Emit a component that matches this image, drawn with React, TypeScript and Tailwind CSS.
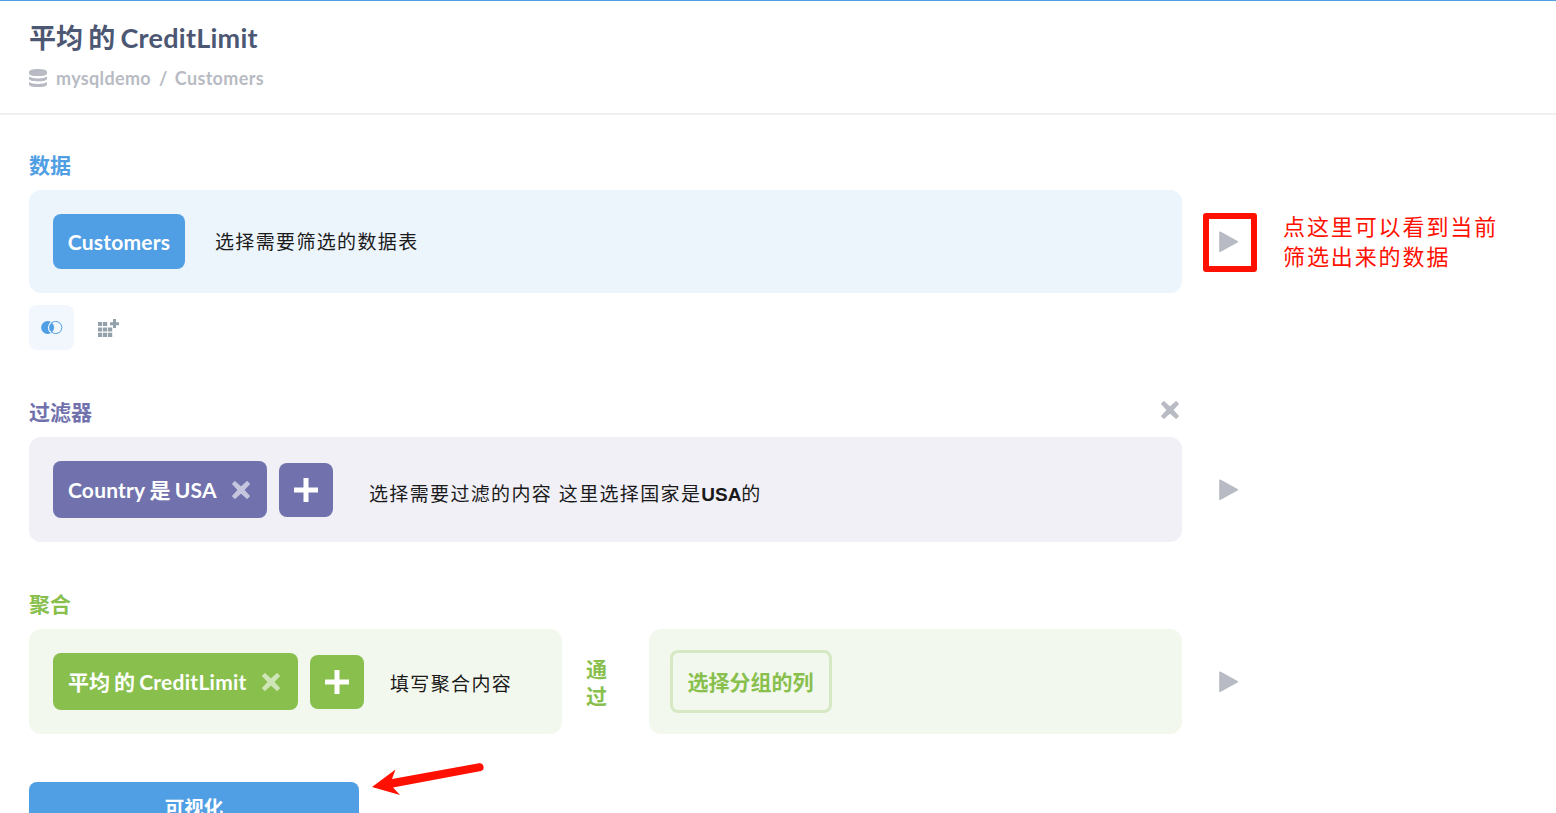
import type { ReactNode } from "react";

type IconProps = { className?: string };

function DatabaseIcon() {
  return (
    <svg width="18" height="18" viewBox="0 0 18 18" fill="#b8bbc3">
      <path d="M0 3.2C0 .9 3 0 9 0s9 .9 9 3.2v1C18 6.300 15 7 9 7S0 6.300 0 4.200z" />
      <path d="M0 7.600C2 8.900 5 9.400 9 9.400s7-.5 9-1.800v2.200c0 1.700-3.500 2.600-9 2.600S0 11.500 0 9.800z" />
      <path d="M0 13.100C2 14.400 5 14.900 9 14.900s7-.5 9-1.800v2.300C18 17.100 14.500 18 9 18S0 17.100 0 15.400z" />
    </svg>
  );
}

function CloseIcon({ className }: IconProps) {
  return (
    <svg width="18" height="18" viewBox="0 0 18 18" fill="currentColor" className={className}>
      <path
        d="M2.900.6 9 6.100 15.100.6 17.400 2.900 11.900 9l5.500 6.100-2.300 2.300L9 11.900l-6.100 5.500L.6 15.100 6.100 9 .6 2.900z"
        stroke="currentColor"
        strokeWidth="1.100"
        strokeLinejoin="round"
      />
    </svg>
  );
}

function PlusIcon() {
  return (
    <svg width="24" height="24" viewBox="0 0 24 24" fill="none">
      <path d="M12 0V24M0 12H24" stroke="white" strokeWidth="5" />
    </svg>
  );
}

function PlayIcon() {
  return (
    <svg width="19" height="22" viewBox="0 0 19 22">
      <path d="M1 1.200 18.200 10.800 1 20.400z" fill="#b8bbc3" stroke="#b8bbc3" strokeWidth="1.600" strokeLinejoin="round" />
    </svg>
  );
}

function JoinIcon() {
  return (
    <svg width="22" height="14" viewBox="0 0 22 14">
      <circle cx="14.700" cy="6.500" r="6.100" fill="none" stroke="#509ee3" strokeWidth="1" />
      <circle cx="6.600" cy="6.500" r="6.500" fill="#509ee3" />
      <path d="M10.100 1.400A6.200 6.200 0 0 0 10.100 11.600" fill="none" stroke="#f2f7fe" strokeWidth="1.200" />
    </svg>
  );
}

function AddColumnIcon() {
  return (
    <svg width="22" height="18" viewBox="0 0 22 18" fill="#93a1ab">
      <path d="M0 3h4.200v4H0zM5 3h4.200v4H5zM0 8.500h4.200v4H0zM5 8.500h4.200v4H5zM10 8.500h4.200v4H10zM0 13.800h4.200V18H0zM5 13.800h4.200V18H5zM10 13.800h4.200V18H10z" />
      <path d="M15 0h3v3.200h3v3h-3V9h-3V6.200h-3v-3h3z" />
    </svg>
  );
}

function StepTitle({ children, className }: { children: ReactNode; className: string }) {
  return <h2 className={`-mt-px h-[25px] text-[21px] leading-6 font-bold ${className}`}>{children}</h2>;
}

function Note({ children, className = "" }: { children: ReactNode; className?: string }) {
  return (
    <span
      className={`font-['Liberation_Sans','Noto_Sans_CJK_SC',sans-serif] text-[19px] leading-6 tracking-[1.35px] whitespace-nowrap text-[#1a1a1a] ${className}`}
    >
      {children}
    </span>
  );
}

function Preview() {
  return (
    <button type="button" className="ml-[21px] flex h-[59px] w-[54px] items-center pl-4">
      <PlayIcon />
    </button>
  );
}

export default function App() {
  return (
    <div className="h-[813px] w-[1556px] overflow-hidden border-t border-[#509ee3] bg-white font-['Lato','Noto_Sans_CJK_SC',sans-serif] font-bold">
      <header className="h-[114px] border-b-2 border-[#f0f0f0] pt-[19px] pl-[29px]">
        <h1 className="h-[37px] text-[27px] leading-9 text-[#4c5773] [word-spacing:-1.3px]">
          平均 的 <span className="tracking-[0.250px]">CreditLimit</span>
        </h1>
        <div className="mt-[9px] flex h-6 items-center text-[18px] leading-6 tracking-[0.340px] text-[#b8bbc3]">
          <DatabaseIcon />
          <span className="ml-[9px]">mysqldemo</span>
          <span className="mr-[8px] ml-[8px]">/</span>
          <span className="-ml-px">Customers</span>
        </div>
      </header>

      <main className="pt-[39px] pl-[29px]">
        <section>
          <StepTitle className="text-[#509ee3]">数据</StepTitle>
          <div className="mt-3 flex items-center">
            <div className="flex h-[103px] w-[1153px] items-center rounded-xl bg-[#ecf4fc] pl-6">
              <button
                type="button"
                className="h-[55px] w-[132px] rounded-lg bg-[#509ee3] text-[21px] tracking-[0.220px] text-white"
              >
                Customers
              </button>
              <Note className="mt-0.5 ml-[30px] font-normal">选择需要筛选的数据表</Note>
            </div>
            <button
              type="button"
              className="mt-px ml-[21px] flex h-[59px] w-[54px] items-center rounded-[3px] border-6 border-[#ff1000] pl-2.5"
            >
              <PlayIcon />
            </button>
            <p className="-mt-1 ml-[26px] w-[230px] font-['Noto_Sans_CJK_SC',sans-serif] text-[22px] leading-[30px] font-normal tracking-[1.9px] text-[#ff1000]">
              点这里可以看到当前
              <br />
              筛选出来的数据
            </p>
          </div>
          <div className="mt-3 flex h-[45px] items-center">
            <button type="button" className="flex size-[45px] items-center justify-center rounded-lg bg-[#f2f7fe]">
              <JoinIcon />
            </button>
            <button type="button" className="ml-6">
              <AddColumnIcon />
            </button>
          </div>
        </section>

        <section className="mt-[51px]">
          <div className="flex w-[1153px] items-start justify-between pr-[3px]">
            <StepTitle className="text-[#7172ad]">过滤器</StepTitle>
            <CloseIcon className="text-[#b8bbc3]" />
          </div>
          <div className="mt-3 flex items-center">
            <div className="flex h-[105px] w-[1153px] items-center rounded-xl bg-[#f1f0f7] pl-6">
              <button
                type="button"
                className="flex h-[57px] w-[214px] items-center rounded-lg bg-[#7172ad] pl-[15px] text-[21px] text-white"
              >
                <span className="[word-spacing:-0.9px]">
                  <span className="tracking-[0.200px]">Country</span> 是 <span className="tracking-[0.200px]">USA</span>
                </span>
                <CloseIcon className="ml-[15px] text-[#c6c7de]" />
              </button>
              <button type="button" className="ml-3 flex size-[54px] items-center justify-center rounded-lg bg-[#7172ad]">
                <PlusIcon />
              </button>
              <Note className="mt-2.5 ml-9 font-normal">
                选择需要过滤的内容 这里选择国家是<b className="tracking-normal">USA</b>的
              </Note>
            </div>
            <Preview />
          </div>
        </section>

        <section className="mt-[51px]">
          <StepTitle className="text-[#88bf4d]">聚合</StepTitle>
          <div className="mt-3 flex items-center">
            <div className="flex h-[105px] w-[533px] items-center rounded-xl bg-[#f2f8ed] pl-6">
              <button
                type="button"
                className="flex h-[57px] w-[245px] items-center rounded-lg bg-[#88bf4d] pl-[15px] text-[21px] text-white"
              >
                <span className="[word-spacing:-1px]">
                  平均 的 <span className="tracking-[0.250px]">CreditLimit</span>
                </span>
                <CloseIcon className="ml-[15px] text-[#cfe5b7]" />
              </button>
              <button type="button" className="ml-3 flex size-[54px] items-center justify-center rounded-lg bg-[#88bf4d]">
                <PlusIcon />
              </button>
              <Note className="mt-1.5 ml-[26px] font-normal">填写聚合内容</Note>
            </div>
            <div className="mx-6 w-[39px] pr-[17px] text-[21px] leading-[27px] text-[#88bf4d]">通过</div>
            <div className="flex h-[105px] w-[533px] items-center rounded-xl bg-[#f2f8ed] pl-[21px]">
              <button
                type="button"
                className="h-[63px] w-[162px] rounded-lg border-3 border-[#d6e9c4] pr-px text-[21px] whitespace-nowrap text-[#88bf4d]"
              >
                选择分组的列
              </button>
            </div>
            <Preview />
          </div>
        </section>

        <div className="flex items-start">
          <button type="button" className="mt-12 h-[52px] w-[330px] rounded-lg bg-[#509ee3] text-[19.500px] leading-[52px] text-white">
            可视化
          </button>
          <svg width="113" height="34" viewBox="0 0 113 34" className="mt-[28px] ml-[13px]">
            <path
              d="M0 25 23.500 7.500 20 17 107 1.200a4 4 0 0 1 2 7.700L21 25.500 28 33z"
              fill="#ff1000"
            />
          </svg>
        </div>
      </main>
    </div>
  );
}
